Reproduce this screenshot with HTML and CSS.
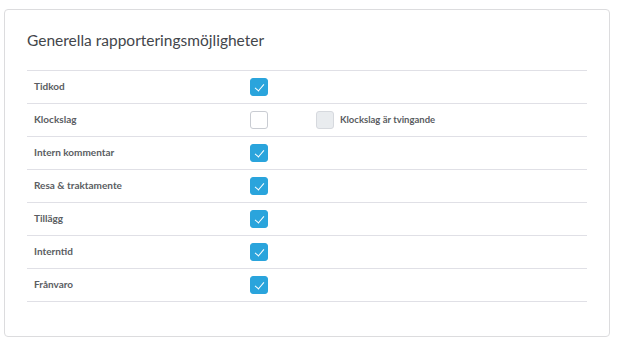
FILE: index.html
```html
<!DOCTYPE html>
<html lang="sv">
<head>
    <meta charset="UTF-8" />
    <title>Rapporteringsmöjligheter</title>
    <link rel="stylesheet" href="styles.css">
</head>
<body>

    <div class="card">
        <h2 class="card-title">Generella rapporteringsmöjligheter</h2>

        <div class="settings">
            <div class="row">
                <span class="label">Tidkod</span>
                <span class="box checked"></span>
            </div>
            <div class="row">
                <span class="label">Klockslag</span>
                <span class="box"></span>
                <span class="sub-option">
                    <span class="box disabled"></span>
                    Klockslag är tvingande
                </span>
            </div>
            <div class="row">
                <span class="label">Intern kommentar</span>
                <span class="box checked"></span>
            </div>
            <div class="row">
                <span class="label">Resa &amp; traktamente</span>
                <span class="box checked"></span>
            </div>
            <div class="row">
                <span class="label">Tillägg</span>
                <span class="box checked"></span>
            </div>
            <div class="row">
                <span class="label">Interntid</span>
                <span class="box checked"></span>
            </div>
            <div class="row">
                <span class="label">Frånvaro</span>
                <span class="box checked"></span>
            </div>
        </div>
    </div>

</body>
</html>
```

FILE: styles.css
```css
body {
    margin: 0;
    background-color: #fff;
    font-family: "Lato", "Open Sans", sans-serif;
    color: #4a4d52;
}

.card {
    box-sizing: border-box;
    width: 606px;
    height: 328px;
    margin: 9px 0 0 4px;
    padding: 21px 22px 0 22px;
    border: 1px solid #dcdcde;
    border-radius: 4px;
}

.card-title {
    margin: 0 0 21px 0;
    font-size: 15.5px;
    font-weight: 400;
    line-height: 18px;
    color: #43464b;
}

.settings {
    border-bottom: 1px solid #e0e0e6;
}

.row {
    display: grid;
    grid-template-columns: 223px 66px 1fr;
    align-items: center;
    height: 32px;
    border-top: 1px solid #e0e0e6;
}

.label {
    padding-left: 7px;
    margin-bottom: 3px;
    font-size: 10px;
    font-weight: 700;
    color: #5a5d62;
}

.box {
    box-sizing: border-box;
    width: 18px;
    height: 18px;
    border: 1px solid #c9ccd2;
    border-radius: 3px;
    background-color: #fff;
    position: relative;
}

.box.checked {
    border-color: #2aa4dc;
    background-color: #2aa4dc;
}

/* bocken ritas med en roterad kant */
.box.checked::after {
    content: "";
    position: absolute;
    left: 6px;
    top: 3px;
    width: 4px;
    height: 8px;
    border-right: 1px solid #fff;
    border-bottom: 1px solid #fff;
    transform: rotate(40deg);
}

.box.disabled {
    background-color: #e9ecef;
    border-color: #d6d9de;
}

.sub-option {
    display: flex;
    align-items: center;
    gap: 6px;
    margin-bottom: 2px;
    font-size: 9.5px;
    font-weight: 700;
    color: #5a5d62;
}

.sub-option .box {
    margin-bottom: -2px;
}
```
